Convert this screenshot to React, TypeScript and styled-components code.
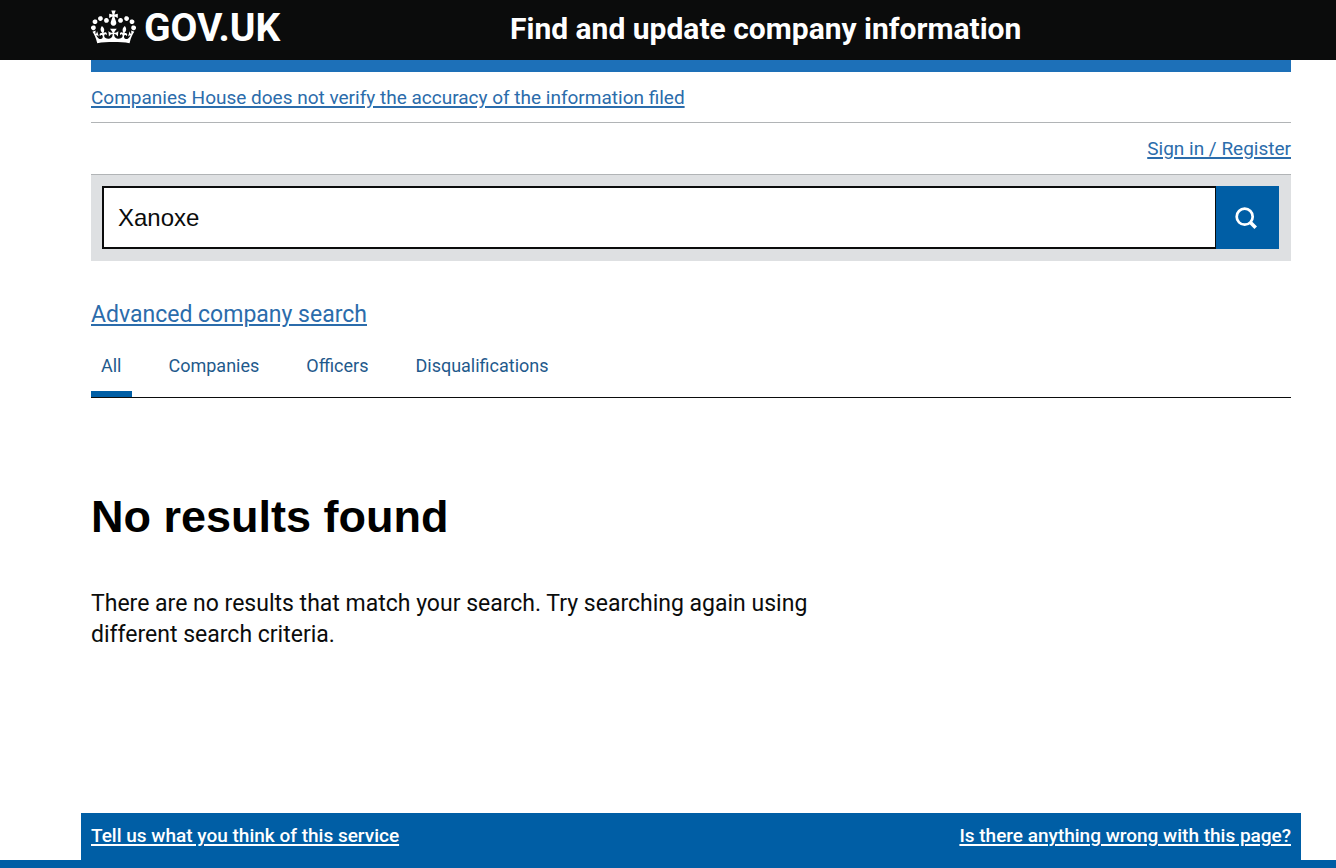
import React, { useState } from 'react';
import styled, { createGlobalStyle } from 'styled-components';

const GlobalStyle = createGlobalStyle`
  *, *::before, *::after { box-sizing: border-box; }
  body {
    margin: 0;
    background: #fff;
    color: #0b0c0c;
    font-family: Roboto, "Liberation Sans", sans-serif;
    font-size: 20px;
    line-height: 24px;
  }
`;

const Page = styled.div`
  min-height: 100vh;
  display: flex;
  flex-direction: column;
`;

const Header = styled.header`
  background: #0b0c0c;
  color: #fff;
  height: 60px;
  padding: 0 45px 0 91px;
  display: flex;
`;

const HeaderLogo = styled.div`
  flex: 0 0 419px;
  padding-top: 10px;
`;

const LogoLink = styled.a`
  display: flex;
  align-items: flex-start;
  gap: 8px;
  color: #fff;
  font-size: 39px;
  font-weight: 700;
  line-height: 36px;
  text-decoration: none;
`;

const ServiceName = styled.a`
  padding-top: 13px;
  color: #fff;
  font-size: 30px;
  font-weight: 700;
  line-height: 32px;
  text-decoration: none;
  white-space: nowrap;
`;

const Container = styled.div`
  margin: 0 45px 0 91px;
`;

const BlueBar = styled.div`
  height: 12px;
  background: #1d70b8;
`;

const Strip = styled.div<{ $end?: boolean }>`
  display: flex;
  justify-content: ${(p) => (p.$end ? 'flex-end' : 'flex-start')};
  padding: 14px 0 ${(p) => (p.$end ? '13px' : '12px')};
  border-bottom: 1px solid #b1b4b6;
`;

const Link = styled.a<{ $large?: boolean }>`
  color: #2b6cab;
  font-size: ${(p) => (p.$large ? '23px' : '19px')};
  text-decoration: underline;
  text-decoration-thickness: 2px;
  text-underline-offset: 2px;
`;

const SearchForm = styled.form`
  display: flex;
  padding: 11px 12px 12px 11px;
  background: #dee0e2;
`;

const SearchInput = styled.input`
  flex: 1;
  min-width: 0;
  height: 63px;
  padding: 0 14px;
  border: 2px solid #0b0c0c;
  border-right-width: 1px;
  border-radius: 0;
  background: #fff;
  color: #0b0c0c;
  font-family: "Liberation Sans", Arial, sans-serif;
  font-size: 24px;
  outline: none;
`;

const SearchButton = styled.button`
  display: flex;
  align-items: center;
  justify-content: center;
  width: 63px;
  padding: 0 4px 0 0;
  border: 0;
  background: #005ea5;
  color: #fff;
  cursor: pointer;
`;

const Advanced = styled.p`
  margin: 42px 0 0;
`;

const Tabs = styled.nav`
  display: flex;
  gap: 27px;
  margin-top: 19px;
  border-bottom: 1px solid #0b0c0c;
`;

const Tab = styled.a<{ $active?: boolean }>`
  padding: 8px 10px 13px;
  border-bottom: 6px solid ${(p) => (p.$active ? '#005ea5' : 'transparent')};
  color: #1f5a8c;
  font-size: 18px;
  text-decoration: none;
`;

const Results = styled.main`
  max-width: 730px;
  padding-bottom: 160px;
`;

const Heading = styled.h1`
  margin: 94px 0 0;
  color: #000;
  font-family: "Liberation Sans", Arial, sans-serif;
  font-size: 45px;
  line-height: 50px;
`;

const Message = styled.p`
  margin: 46px 0 0;
  font-size: 23px;
  line-height: 31px;
`;

const Footer = styled.footer`
  margin-top: auto;
  border-bottom: 8px solid #005ea5;
`;

const Feedback = styled.div`
  display: flex;
  justify-content: space-between;
  height: 47px;
  margin: 0 35px 0 81px;
  padding: 11px 10px 0;
  background: #005ea5;
`;

const FooterLink = styled.a`
  color: #fff;
  font-size: 19px;
  font-weight: 500;
  text-decoration: underline;
  text-decoration-thickness: 2px;
  text-underline-offset: 2px;
`;

const Crown = () => (
  <svg width="45" height="34" viewBox="0 0 132 97" fill="currentColor" aria-hidden="true">
    <path d="M25 30.2c3.5 1.5 7.7-.2 9.1-3.7 1.5-3.6-.2-7.8-3.9-9.2-3.6-1.4-7.6.3-9.1 3.9-1.4 3.5.3 7.5 3.9 9zM9 39.5c3.6 1.5 7.8-.2 9.2-3.7 1.5-3.6-.2-7.8-3.9-9.1-3.6-1.5-7.6.2-9.1 3.8-1.4 3.5.3 7.5 3.8 9zM4.4 57.2c3.5 1.5 7.7-.2 9.1-3.8 1.5-3.6-.2-7.7-3.9-9.1-3.5-1.5-7.6.3-9.1 3.8-1.4 3.5.3 7.6 3.9 9.1zm38.3-21.4c3.5 1.5 7.7-.2 9.1-3.8 1.5-3.6-.2-7.7-3.9-9.1-3.6-1.5-7.6.3-9.1 3.8-1.3 3.6.4 7.7 3.9 9.1zm64.4-5.6c-3.6 1.5-7.8-.2-9.1-3.7-1.5-3.6.2-7.8 3.8-9.2 3.6-1.4 7.7.3 9.2 3.9 1.3 3.5-.4 7.5-3.9 9zm15.9 9.3c-3.6 1.5-7.7-.2-9.1-3.7-1.5-3.6.2-7.8 3.7-9.1 3.6-1.5 7.7.2 9.2 3.8 1.5 3.5-.3 7.5-3.8 9zm4.7 17.7c-3.6 1.5-7.8-.2-9.2-3.8-1.5-3.6.2-7.7 3.9-9.1 3.6-1.5 7.7.3 9.2 3.8 1.3 3.5-.4 7.6-3.9 9.1zM89.3 35.8c-3.6 1.5-7.8-.2-9.2-3.8-1.4-3.6.2-7.7 3.9-9.1 3.6-1.5 7.7.3 9.2 3.8 1.4 3.6-.3 7.7-3.9 9.1zM69.7 17.7l8.9 4.7V9.3l-8.9 2.8c-.2-.3-.5-.6-.9-.9L72.4 0H59.6l3.5 11.2c-.3.3-.6.5-.9.9l-8.8-2.8v13.1l8.8-4.7c.3.3.6.7.9.9l-5 15.4v.1c-.2.8-.4 1.6-.4 2.4 0 4.1 3.1 7.5 7 8.1h.2c.3 0 .7.1 1 .1.4 0 .7 0 1-.1h.2c4-.6 7.1-4.1 7.1-8.1 0-.8-.1-1.7-.4-2.4V34l-5.1-15.4c.4-.2.7-.6 1-.9zM66 92.8c16.9 0 32.8 1.1 47.1 3.2 4-16.9 8.9-26.7 14-33.5l-9.6-3.4c1 4.9 1.1 7.2 0 10.2-1.5-1.4-3-4.3-4.2-8.7L108.6 76c2.8-2 5-3.2 7.5-3.3-4.4 9.4-10 11.9-13.6 11.2-4.3-.8-6.3-4.6-5.6-7.9 1-4.7 5.7-5.9 8-.5 4.3-8.7-3-11.4-7.6-8.8 7.1-7.2 7.9-13.5 2.1-21.1-8 6.1-8.1 12.3-4.5 20.8-4.7-5.4-12.1-2.5-9.5 6.2 3.4-5.2 7.9-2 7.2 3.1-.6 4.3-6.4 7.8-13.5 7.2-10.3-.9-10.9-8-11.2-13.8 2.5-.5 7.1 1.8 11 7.3L80.2 60c-4.1 4.4-8 5.3-12.3 5.4 1.4-4.4 8-11.6 8-11.6H55.5s6.4 7.2 7.9 11.6c-4.2-.1-8-1-12.3-5.4l1.4 16.4c3.9-5.5 8.5-7.7 10.9-7.3-.3 5.8-.9 12.8-11.1 13.8-7.2.6-12.9-2.9-13.5-7.2-.7-5 3.8-8.3 7.1-3.1 2.7-8.7-4.6-11.6-9.4-6.2 3.7-8.5 3.6-14.7-4.6-20.8-5.8 7.6-5 13.9 2.2 21.1-4.7-2.6-11.9.1-7.7 8.8 2.3-5.5 7.1-4.2 8.1.5.7 3.3-1.3 7.1-5.7 7.9-3.5.7-9-1.8-13.5-11.2 2.5.1 4.7 1.3 7.5 3.3l-4.7-15.4c-1.2 4.4-2.7 7.2-4.3 8.7-1.1-3-.9-5.3 0-10.2l-9.5 3.4c5 6.9 9.9 16.7 14 33.5 14.8-2.1 30.8-3.2 47.7-3.2z" />
  </svg>
);

const SearchIcon = () => (
  <svg width="22" height="22" viewBox="0 0 22 22" fill="none" stroke="currentColor" aria-hidden="true">
    <circle cx="9.7" cy="9.7" r="8" strokeWidth="2.7" />
    <path d="M15.2 15.2l5.5 5.5" strokeWidth="3.6" />
  </svg>
);

const TABS = ['All', 'Companies', 'Officers', 'Disqualifications'];

export default function App() {
  const [query, setQuery] = useState('Xanoxe');
  const [active, setActive] = useState('All');

  return (
    <Page>
      <GlobalStyle />
      <Header>
        <HeaderLogo>
          <LogoLink href="#">
            <Crown />
            <span>GOV.UK</span>
          </LogoLink>
        </HeaderLogo>
        <ServiceName href="#">Find and update company information</ServiceName>
      </Header>
      <Container>
        <BlueBar />
        <Strip>
          <Link href="#">Companies House does not verify the accuracy of the information filed</Link>
        </Strip>
        <Strip $end>
          <Link href="#">Sign in / Register</Link>
        </Strip>
        <SearchForm role="search" onSubmit={(e) => e.preventDefault()}>
          <SearchInput
            type="text"
            aria-label="Search for a company or officer"
            value={query}
            onChange={(e) => setQuery(e.target.value)}
          />
          <SearchButton type="submit" aria-label="Search">
            <SearchIcon />
          </SearchButton>
        </SearchForm>
        <Advanced>
          <Link $large href="#">Advanced company search</Link>
        </Advanced>
        <Tabs aria-label="Result types">
          {TABS.map((tab) => (
            <Tab
              key={tab}
              href="#"
              $active={tab === active}
              aria-current={tab === active ? 'page' : undefined}
              onClick={() => setActive(tab)}
            >
              {tab}
            </Tab>
          ))}
        </Tabs>
        <Results>
          <Heading>No results found</Heading>
          <Message>
            There are no results that match your search. Try searching again using different search criteria.
          </Message>
        </Results>
      </Container>
      <Footer>
        <Feedback>
          <FooterLink href="#">Tell us what you think of this service</FooterLink>
          <FooterLink href="#">Is there anything wrong with this page?</FooterLink>
        </Feedback>
      </Footer>
    </Page>
  );
}
